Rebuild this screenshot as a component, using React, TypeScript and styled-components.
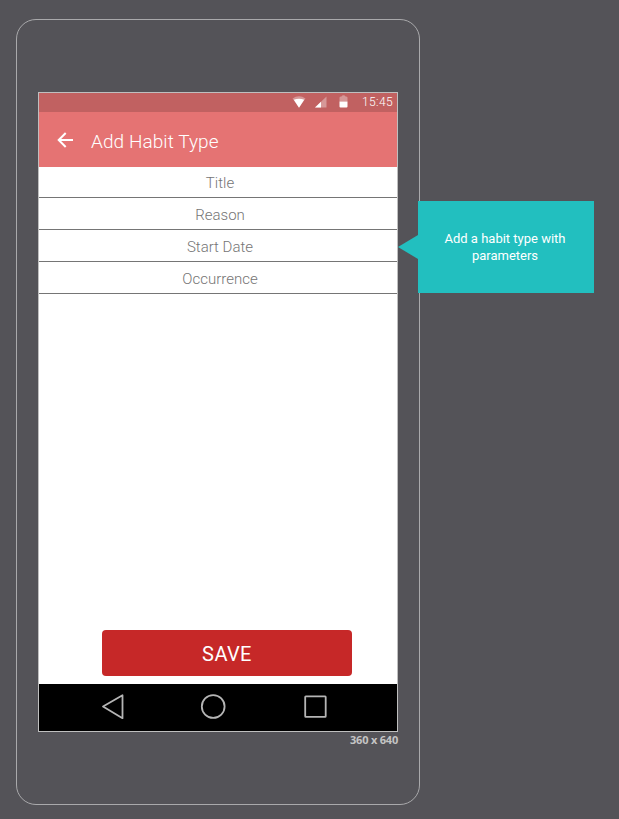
import React from "react";
import styled, { createGlobalStyle } from "styled-components";

const GlobalStyle = createGlobalStyle`
  html, body { margin: 0; background: #545358; }
  *, *::before { box-sizing: border-box; }
  body { font-family: Roboto, "Open Sans", sans-serif; overflow: hidden; }
`;

const Canvas = styled.main`
  width: 619px;
  height: 819px;
  padding: 19px 0 0 16px;
  background: #545358;
`;

const DeviceFrame = styled.section`
  position: relative;
  width: 404px;
  height: 786px;
  padding: 72px 21px 0;
  border: 1px solid #a9a9ab;
  border-radius: 20px;
`;

const Screen = styled.div`
  display: flex;
  flex-direction: column;
  width: 360px;
  height: 640px;
  border: 1px solid #bfbfbf;
  background: #fff;
`;

const StatusBar = styled.div`
  display: flex;
  align-items: center;
  justify-content: flex-end;
  flex: 0 0 19px;
  height: 19px;
  padding-right: 4px;
  background: #c16161;
`;

const StatusIcons = styled.svg`
  display: block;
  width: 60px;
  height: 19px;
  margin-right: 10px;
`;

const Clock = styled.time`
  width: 31px;
  color: #fff;
  font-size: 12px;
  font-weight: 300;
  line-height: 19px;
  letter-spacing: 0.35px;
  white-space: nowrap;
`;

const AppBar = styled.header`
  display: flex;
  align-items: center;
  flex: 0 0 55px;
  padding: 3px 0 0 18px;
  background: #e57373;
`;

const BackButton = styled.button`
  display: flex;
  width: 16px;
  height: 16px;
  margin: 0 18px 2px 0;
  padding: 0;
  border: 0;
  background: none;
`;

const Heading = styled.h1`
  margin: 0;
  padding-top: 2px;
  color: #fff;
  font-size: 19px;
  font-weight: 300;
  line-height: 24px;
  letter-spacing: 0.08px;
`;

const FieldList = styled.div`
  flex: 1;
`;

const Field = styled.div<{ $first?: boolean }>`
  height: ${({ $first }) => ($first ? 31 : 32)}px;
  padding-left: 4px;
  border-bottom: 1px solid #757575;
  color: #757575;
  font-size: 15px;
  font-weight: 300;
  line-height: ${({ $first }) => ($first ? 33 : 34)}px;
  text-align: center;
`;

const SaveButton = styled.button`
  width: 250px;
  height: 46px;
  margin: 0 0 8px 63px;
  padding: 1px 0 0;
  border: 0;
  border-radius: 4px;
  background: #c62828;
  color: #fff;
  font-family: inherit;
  font-size: 20px;
  font-weight: 400;
  line-height: 24px;
  letter-spacing: 0.4px;
`;

const NavigationBar = styled.nav`
  display: flex;
  flex: 0 0 47px;
  background: #000;
`;

const NavigationIcons = styled.svg`
  display: block;
  width: 358px;
  height: 47px;
`;

const Dimensions = styled.div`
  width: 360px;
  color: #c4c4c4;
  font-family: "Open Sans", sans-serif;
  font-size: 11px;
  font-weight: 700;
  line-height: 15px;
  letter-spacing: -0.2px;
  text-align: right;
`;

const Callout = styled.aside`
  position: absolute;
  top: 181px;
  left: 401px;
  display: flex;
  align-items: center;
  justify-content: center;
  width: 176px;
  height: 92px;
  padding: 0 24px 0 22px;
  background: #22bfbf;
  color: #fff;
  font-size: 13px;
  line-height: 17px;
  text-align: center;

  &::before {
    content: "";
    position: absolute;
    top: 34px;
    left: -20px;
    border: solid transparent;
    border-width: 12px 20px 12px 0;
    border-right-color: #22bfbf;
  }
`;

const fields = ["Title", "Reason", "Start Date", "Occurrence"];

export default function App() {
  return (
    <>
      <GlobalStyle />
      <Canvas>
        <DeviceFrame>
          <Screen>
            <StatusBar>
              <StatusIcons viewBox="0 0 60 19" aria-hidden="true">
                <path d="M.5 5.5Q7 1 13.5 5.5L7 14.5Z" fill="#fff" opacity=".35" />
                <path d="M1.8 6.8Q7 4.8 12.2 6.8L7 14.7Z" fill="#fff" />
                <path d="M23 14.5L34.5 3.5V14.5Z" fill="#fff" opacity=".35" />
                <path d="M23 14.5L29 8.8V14.5Z" fill="#fff" />
                <path d="M47.5 8.5V4.5Q47.5 3.5 49.5 3.5Q50 2.3 51.5 2.3Q53 2.3 53.5 3.5Q55.5 3.5 55.5 4.5V8.5Z" fill="#fff" opacity=".35" />
                <path d="M47.5 8.5H55.5V13.5Q55.5 14.5 54.5 14.5H48.5Q47.5 14.5 47.5 13.5Z" fill="#fff" />
              </StatusIcons>
              <Clock>15:45</Clock>
            </StatusBar>
            <AppBar>
              <BackButton aria-label="Back">
                <svg width="16" height="16" viewBox="0 0 16 16" fill="none" stroke="#fff" strokeWidth="2">
                  <path d="M16 8H2M8.7 1L1.7 8L8.7 15" />
                </svg>
              </BackButton>
              <Heading>Add Habit Type</Heading>
            </AppBar>
            <FieldList>
              {fields.map((label, index) => (
                <Field key={label} $first={index === 0}>{label}</Field>
              ))}
            </FieldList>
            <SaveButton>SAVE</SaveButton>
            <NavigationBar aria-label="System navigation">
              <NavigationIcons viewBox="0 0 358 47" fill="none" stroke="#b5b5b5" strokeWidth="1.8" strokeLinejoin="round">
                <path d="M64 22.5L83.5 11.2V34.2Z" />
                <circle cx="174.2" cy="22.5" r="11.4" />
                <rect x="266.2" y="12.4" width="20.5" height="20.5" rx=".6" />
              </NavigationIcons>
            </NavigationBar>
          </Screen>
          <Dimensions>360 x 640</Dimensions>
          <Callout>Add a habit type with parameters</Callout>
        </DeviceFrame>
      </Canvas>
    </>
  );
}
